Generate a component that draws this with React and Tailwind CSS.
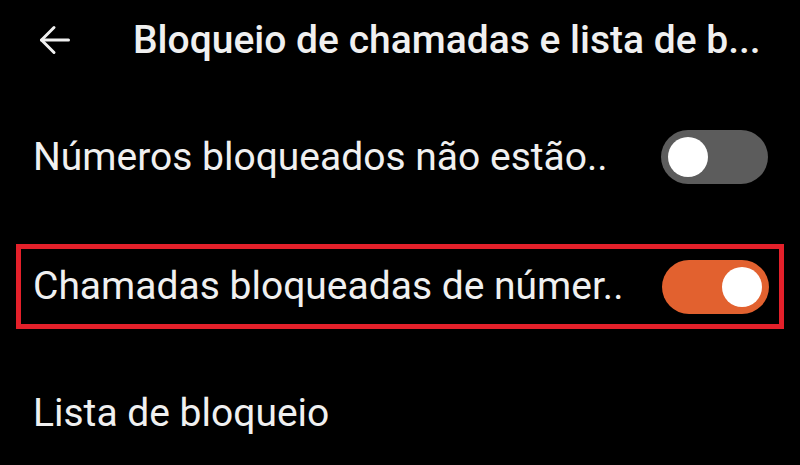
export default function App() {
  const Toggle = ({ on }) => (
    <div
      className={
        "flex h-[54px] w-[107px] shrink-0 items-center rounded-full px-[7px] " +
        (on ? "justify-end bg-[#e2612f]" : "justify-start bg-[#5c5c5c]")
      }
    >
      <div className="h-[40px] w-[40px] rounded-full bg-white" />
    </div>
  );

  return (
    <div
      className="h-[465px] w-[800px] overflow-hidden bg-black text-[#f0f0f0]"
      style={{ fontFamily: "Roboto, 'Noto Sans', sans-serif" }}
    >
      <div className="flex h-[93px] items-start pt-[17px]">
        <div className="flex h-[46px] w-[133px] items-center pl-[39px]">
          <svg width="31" height="30" viewBox="0 0 31 30" fill="none" stroke="#f0f0f0" strokeWidth="3" strokeLinecap="round" strokeLinejoin="round">
            <path d="M2.5 15H29.5" />
            <path d="M15 2.5L2.5 15L15 27.5" />
          </svg>
        </div>
        <div className="h-[46px] text-[39px] font-medium leading-[46px] whitespace-nowrap">
          Bloqueio de chamadas e lista de b...
        </div>
      </div>

      <div className="flex h-[128px] items-center justify-between pl-[33px] pr-[32px]">
        <span className="text-[39px] leading-none whitespace-nowrap">Números bloqueados não estão..</span>
        <Toggle on={false} />
      </div>

      <div className="h-[128px] pt-[23px]">
        <div className="mx-[16px] flex h-[85px] items-center justify-between border-[5px] border-[#e4202a] pl-[12px] pr-[10px]">
          <span className="text-[39px] leading-none whitespace-nowrap">Chamadas bloqueadas de númer..</span>
          <Toggle on={true} />
        </div>
      </div>

      <div className="flex h-[128px] items-center pl-[33px]">
        <span className="text-[39px] leading-none whitespace-nowrap">Lista de bloqueio</span>
      </div>
    </div>
  );
}
